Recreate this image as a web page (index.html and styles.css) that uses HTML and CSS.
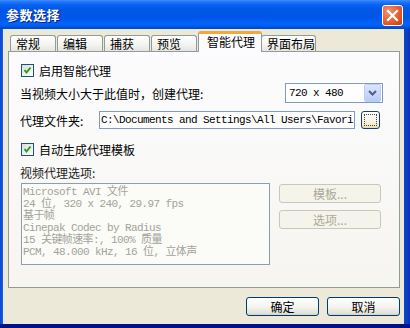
FILE: index.html
```html
<!DOCTYPE html>
<html lang="zh-CN">
<head>
  <meta charset="UTF-8">
  <title>参数选择</title>
  <link rel="stylesheet" href="styles.css">
</head>
<body>
  <div class="window">
    <div class="titlebar">
      <span class="title">参数选择</span>
      <span class="close">
        <svg width="13" height="13" viewBox="0 0 13 13"><path d="M2 2 L11 11 M11 2 L2 11" stroke="#fff" stroke-width="2.2" stroke-linecap="square"/></svg>
      </span>
    </div>

    <div class="client">
      <div class="tabs">
        <div class="tab">常规</div>
        <div class="tab">编辑</div>
        <div class="tab">捕获</div>
        <div class="tab">预览</div>
        <div class="tab active">智能代理</div>
        <div class="tab last">界面布局</div>
      </div>

      <div class="panel">
        <div class="check-row">
          <span class="checkbox">
            <svg width="11" height="11" viewBox="0 0 11 11"><path d="M2.5 5 L4.5 7.5 L8.5 2.5" fill="none" stroke="#21a121" stroke-width="2"/></svg>
          </span>
          <span>启用智能代理</span>
        </div>

        <div class="row row-size">
          <span class="label">当视频大小大于此值时，创建代理:</span>
          <div class="select">
            <span class="select-value">720 x 480</span>
            <span class="drop">
              <svg width="9" height="6" viewBox="0 0 9 6"><path d="M1 1 L4.5 4.5 L8 1" fill="none" stroke="#4d6185" stroke-width="2"/></svg>
            </span>
          </div>
        </div>

        <div class="row row-folder">
          <span class="label folder-label">代理文件夹:</span>
          <div class="textbox">C:\Documents and Settings\All Users\Favori</div>
          <span class="browse"><span class="focus-ring"></span></span>
        </div>

        <div class="check-row second">
          <span class="checkbox">
            <svg width="11" height="11" viewBox="0 0 11 11"><path d="M2.5 5 L4.5 7.5 L8.5 2.5" fill="none" stroke="#21a121" stroke-width="2"/></svg>
          </span>
          <span>自动生成代理模板</span>
        </div>

        <div class="group-label">视频代理选项:</div>

        <div class="options">
          <div class="listbox">
            <div>Microsoft AVI 文件</div>
            <div>24 位, 320 x 240, 29.97 fps</div>
            <div>基于帧</div>
            <div>Cinepak Codec by Radius</div>
            <div>15 关键帧速率:, 100% 质量</div>
            <div>PCM, 48.000 kHz, 16 位, 立体声</div>
          </div>
          <div class="side-buttons">
            <span class="btn disabled">模板...</span>
            <span class="btn disabled">选项...</span>
          </div>
        </div>
      </div>

      <div class="footer">
        <button class="btn">确定</button>
        <button class="btn">取消</button>
      </div>
    </div>
  </div>
</body>
</html>
```

FILE: styles.css
```css
body {
  margin: 0;
  font-family: "Noto Sans CJK SC", "Liberation Sans", sans-serif;
  font-size: 12px;
  color: #000;
}
.window {
  width: 410px;
  height: 328px;
  display: flex;
  flex-direction: column;
  background: linear-gradient(90deg, #0a44d6 0, #1660e8 3px, #0a52e0 400px, #0637b8 410px);
  box-sizing: border-box;
  border-bottom: 4px solid #00138c;
}
.titlebar {
  height: 29px;
  display: flex;
  align-items: center;
  justify-content: space-between;
  padding: 0 7px 0 6px;
  background: linear-gradient(#3d8bff 0%, #1c74fb 8%, #0a62f0 16%, #0058e6 30%, #0055e8 60%, #005cf2 72%, #0266fb 82%, #005aeb 90%, #0046c0 100%);
}
.title {
  color: #fff;
  font-weight: bold;
  font-size: 13px;
  letter-spacing: 0.5px;
  text-shadow: 1px 1px #0a2080;
}
.close {
  width: 19px;
  height: 19px;
  margin-top: 1px;
  border: 1px solid #fff;
  border-radius: 3px;
  background: radial-gradient(circle at 30% 30%, #f09270, #e35a2a 60%, #c23d10);
  display: flex;
  align-items: center;
  justify-content: center;
}
.client {
  flex: 1;
  margin: 0 6px 0 3px;
  padding-left: 5px;
  background: #ece9d8;
  display: flex;
  flex-direction: column;
}
.tabs {
  height: 22px;
  display: flex;
  align-items: flex-end;
  padding-left: 2px;
  position: relative;
  z-index: 1;
}
.tab {
  box-sizing: border-box;
  width: 46px;
  height: 16px;
  margin-right: 1px;
  padding-left: 5px;
  border: 1px solid #919b9c;
  border-bottom: none;
  border-radius: 3px 3px 0 0;
  background: linear-gradient(#fff, #f3f3ef 60%, #e6e5df);
  line-height: 15px;
  white-space: nowrap;
}
.tab.active {
  width: 64px;
  height: 21px;
  margin: 0 -1px -1px 0;
  padding-left: 8px;
  border-top: 3px solid #f2a93c;
  line-height: 16px;
  background: #fcfcfe;
  position: relative;
  z-index: 2;
}
.tab.last {
  width: 55px;
  margin-left: 0;
}
.panel {
  box-sizing: border-box;
  height: 237px;
  margin-right: 4px;
  border: 1px solid #919b9c;
  background: linear-gradient(#fcfcfe, #f6f5f0);
  padding: 10px 16px 0 11px;
}
.check-row {
  height: 16px;
  display: flex;
  align-items: center;
}
.check-row.second {
  margin-top: 12px;
}
.checkbox {
  width: 11px;
  height: 11px;
  margin: 0 5px 0 1px;
  border: 1px solid #1c5180;
  background: linear-gradient(135deg, #dcdcd7, #fff);
  display: flex;
}
.row {
  display: flex;
  align-items: center;
}
.row-size {
  margin-top: 5px;
  height: 20px;
}
.row-size .label {
  flex: 1;
}
.select {
  width: 96px;
  height: 18px;
  border: 1px solid #7f9db9;
  background: #fff;
  display: flex;
  align-items: center;
}
.select-value {
  flex: 1;
  padding-left: 3px;
  font-family: "Liberation Mono", "Noto Sans CJK SC", monospace;
  font-size: 11px;
  letter-spacing: -0.6px;
}
.drop {
  width: 15px;
  height: 16px;
  margin-right: 1px;
  border: 1px solid #b9cdf6;
  border-radius: 2px;
  background: linear-gradient(#dbe6fe, #b7cbf7);
  display: flex;
  align-items: center;
  justify-content: center;
}
.row-folder {
  margin-top: 8px;
  height: 18px;
}
.folder-label {
  width: 79px;
}
.textbox {
  width: 253px;
  height: 16px;
  border: 1px solid #7f9db9;
  background: #fff;
  padding-left: 1px;
  overflow: hidden;
  white-space: nowrap;
  font-family: "Liberation Mono", "Noto Sans CJK SC", monospace;
  font-size: 11px;
  letter-spacing: -0.6px;
  line-height: 16px;
}
.browse {
  width: 17px;
  height: 16px;
  margin-left: 6px;
  border: 1px solid #1f3a6a;
  border-radius: 3px;
  background: linear-gradient(#fff, #f4f1dc 70%, #e8dfb0);
  display: flex;
  align-items: center;
  justify-content: center;
}
.focus-ring {
  width: 11px;
  height: 10px;
  border: 1px dotted #444;
}
.group-label {
  margin-top: 9px;
  line-height: 14px;
  color: #222;
}
.options {
  margin-top: 3px;
  display: flex;
  align-items: flex-start;
}
.listbox {
  width: 246px;
  height: 78px;
  margin-left: 1px;
  padding: 2px 0 0 1px;
  border: 1px solid #8d9cae;
  background: #fbfbf8;
  color: #a3a39a;
  font-family: "Liberation Mono", "Noto Sans CJK SC", monospace;
  font-size: 11px;
  letter-spacing: -0.6px;
  line-height: 12px;
  white-space: nowrap;
}
.side-buttons {
  margin: 1px 0 0 9px;
  display: flex;
  flex-direction: column;
  gap: 7px;
}
.btn {
  display: flex;
  align-items: center;
  justify-content: center;
  box-sizing: border-box;
  width: 73px;
  height: 19px;
  padding: 0;
  border: 1px solid #003c74;
  border-radius: 3px;
  background: linear-gradient(#fff, #f4f4f0 50%, #e4e1d6 90%, #d6d0c5);
  font-family: "Noto Sans CJK SC", "Liberation Sans", sans-serif;
  font-size: 12px;
  color: #000;
}
.btn.disabled {
  width: 102px;
  border-color: #c9c7ba;
  background: #f5f4ea;
  color: #aca899;
}
.footer {
  margin: 9px 4px 0 0;
  display: flex;
  justify-content: flex-end;
  gap: 8px;
}
```
